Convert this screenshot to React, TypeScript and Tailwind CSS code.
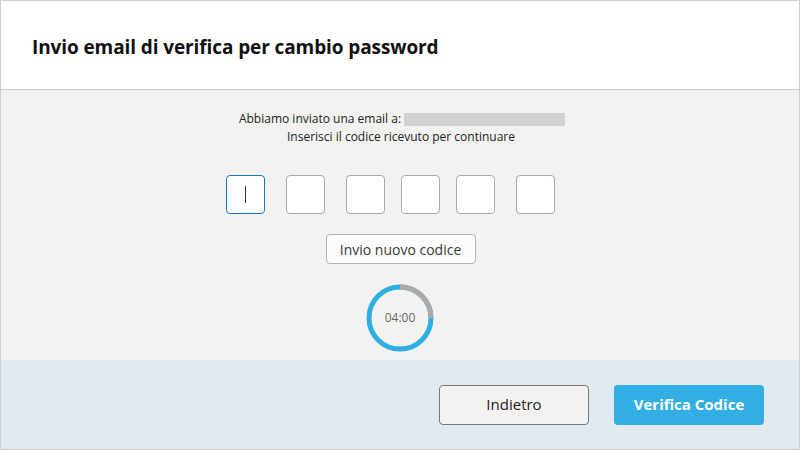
import React from "react";

export default function App() {
  const boxes = ["", "ml-[21px]", "ml-[21px]", "ml-[16px]", "ml-[16px]", "ml-[21px]"];
  const r = 31;
  const c = 2 * Math.PI * r;
  return (
    <div
      className="w-[800px] h-[450px] border border-[#cfcfcf] flex flex-col bg-[#f3f2f1]"
      style={{ fontFamily: '"Open Sans", "Noto Sans", sans-serif' }}
    >
      <div className="h-[89px] bg-white border-b border-[#c8c8c8] flex items-center pl-[31px] shrink-0">
        <h1 className="text-[19px] font-bold text-[#111] tracking-[-0.1px] mt-[4px]">
          Invio email di verifica per cambio password
        </h1>
      </div>
      <div className="flex-1 flex flex-col items-center pt-[20px]">
        <div className="flex items-center text-[12px] text-[#222] leading-[18px] ml-[4px]">
          <span>Abbiamo inviato una email a:</span>
          <span className="inline-block w-[161px] h-[13px] bg-[#d2d2d3] ml-[3px]" />
        </div>
        <div className="text-[12px] text-[#222] leading-[18px] ml-[2px]">
          Inserisci il codice ricevuto per continuare
        </div>
        <div className="flex mt-[29px] ml-[-19px]">
          {boxes.map((m, i) => (
            <div
              key={i}
              className={`w-[39px] h-[39px] rounded-[4px] bg-white border flex items-center justify-center ${m} ${
                i === 0 ? "border-[#1a73c8]" : "border-[#a9a9a9]"
              }`}
            >
              {i === 0 && <div className="w-[1px] h-[17px] bg-[#333]" />}
            </div>
          ))}
        </div>
        <button className="mt-[20px] w-[150px] h-[30px] bg-[#fcfcfc] border border-[#b4b4b4] rounded-[4px] text-[14px] text-[#3a3a3a] ml-[1px]">
          Invio nuovo codice
        </button>
        <div className="relative w-[70px] h-[70px] mt-[19px]">
          <svg width="70" height="70" viewBox="0 0 70 70" className="absolute inset-0">
            <circle cx="35" cy="35" r={r} fill="none" stroke="#2eaee3" strokeWidth="5" />
            <circle
              cx="35"
              cy="35"
              r={r}
              fill="none"
              stroke="#aaaaaa"
              strokeWidth="5"
              strokeDasharray={`${c / 4} ${c}`}
              transform="rotate(-90 35 35)"
            />
          </svg>
          <div className="absolute inset-0 flex items-center justify-center text-[12px] text-[#666]">
            04:00
          </div>
        </div>
      </div>
      <div className="h-[89px] bg-[#e0eaf0] flex items-center justify-end pr-[35px] gap-[25px] shrink-0">
        <button className="w-[150px] h-[40px] rounded-[4px] border border-[#777] bg-[#f3f2f1] text-[15px] text-[#222]">
          Indietro
        </button>
        <button className="w-[150px] h-[40px] rounded-[4px] bg-[#33aee2] text-[15px] font-bold text-white">
          Verifica Codice
        </button>
      </div>
    </div>
  );
}
